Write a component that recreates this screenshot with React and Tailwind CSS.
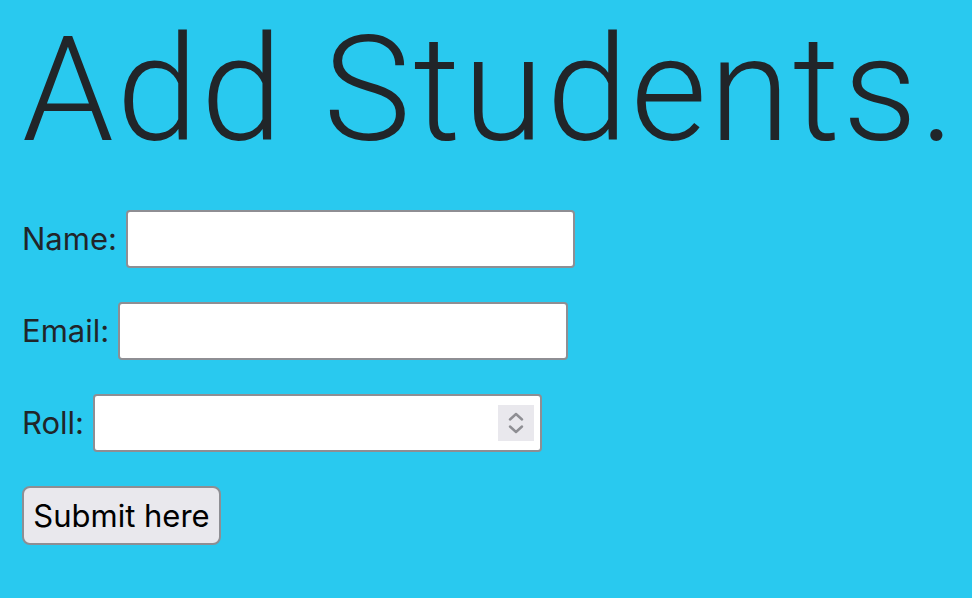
import React from "react";

export default function App() {
  return (
    <div className="min-h-[598px] w-full bg-[#29c9ef] text-[#212529] pl-[22px] font-['Inter',sans-serif]">
      <h1 className="text-[147px] font-light leading-[1.2] pt-[2px] m-0 whitespace-nowrap tracking-[2.6px] font-['Roboto',sans-serif]">
        Add Students.
      </h1>
      <form className="flex flex-col gap-[34px] mt-[32px]">
        <div className="flex items-center">
          <label className="text-[31px] mr-[9px]">Name:</label>
          <input type="text" className="w-[449px] h-[58px] bg-white border-2 border-[#8e8e93] rounded-[4px]" />
        </div>
        <div className="flex items-center">
          <label className="text-[31px] mr-[9px]">Email:</label>
          <input type="email" className="w-[450px] h-[58px] bg-white border-2 border-[#8e8e93] rounded-[4px]" />
        </div>
        <div className="flex items-center">
          <label className="text-[31px] mr-[9px]">Roll:</label>
          <div className="relative w-[449px] h-[58px] bg-white border-2 border-[#8e8e93] rounded-[4px]">
            <div className="absolute right-[6px] top-[9px] w-[36px] h-[36px] bg-[#e9e8ed] flex flex-col items-center justify-center gap-[4px]">
              <svg width="16" height="9" viewBox="0 0 16 9" fill="none" stroke="#8e8e93" strokeWidth="2.4" strokeLinecap="round" strokeLinejoin="round">
                <path d="M2 7.5 L8 2 L14 7.5" />
              </svg>
              <svg width="16" height="9" viewBox="0 0 16 9" fill="none" stroke="#8e8e93" strokeWidth="2.4" strokeLinecap="round" strokeLinejoin="round">
                <path d="M2 1.5 L8 7 L14 1.5" />
              </svg>
            </div>
          </div>
        </div>
        <div>
          <button type="button" className="w-[199px] h-[59px] bg-[#e9e8ed] border-2 border-[#8e8e93] rounded-[8px] text-[31px] text-black">
            Submit here
          </button>
        </div>
      </form>
    </div>
  );
}
